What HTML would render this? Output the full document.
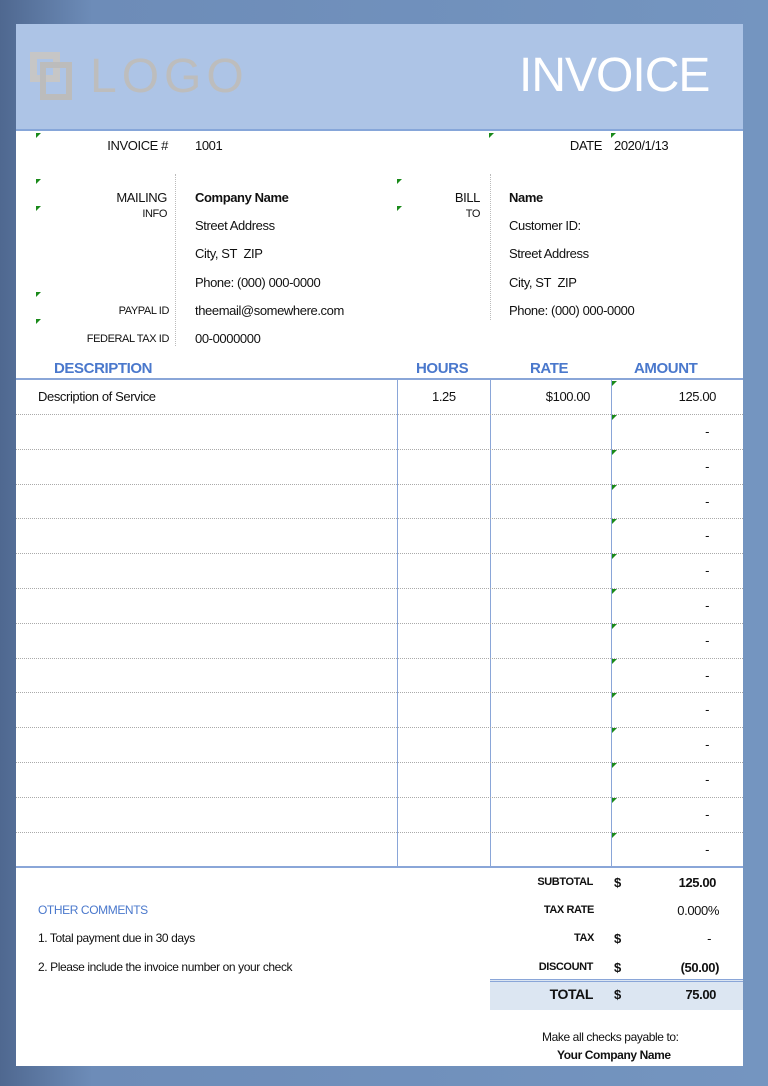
<!DOCTYPE html>
<html><head><meta charset="utf-8"><style>
*{margin:0;padding:0;box-sizing:border-box}
body{width:768px;height:1086px;background:linear-gradient(90deg,#4f6890 0,#6d8cb8 12%,#7495c0 100%);position:relative;overflow:hidden;font-family:"Liberation Sans",sans-serif;color:#111;font-size:13px;letter-spacing:-0.4px}
.pg{position:absolute;left:16px;top:24px;width:727px;height:1042px;background:#fff}
.hd{position:absolute;left:0;top:0;width:727px;height:107px;background:#adc4e6;border-bottom:2px solid #86a6d9}
.a{position:absolute;white-space:nowrap}
.r{text-align:right}
.b{font-weight:bold}
.bl{color:#4a78cc;font-weight:bold;font-size:15px}
.tri{position:absolute;width:0;height:0;border-top:5px solid #1a8a1a;border-right:5px solid transparent}
.vl{position:absolute;width:1px;background:#8aa6d8}
.rl{position:absolute;left:0;width:727px;border-top:1px dotted #aaa}
.sm{font-size:11px}
</style></head><body>
<div class="pg">
<div class="hd">
 <div class="a" style="left:14px;top:28px;width:30px;height:30px;border:7px solid #c6c6c6"></div>
 <div class="a" style="left:24px;top:38px;width:32px;height:38px;border:6px solid #bcbcbc"></div>
 <div class="a" style="left:74px;top:25px;font-size:48px;color:#bdbdbd;letter-spacing:5px">LOGO</div>
 <div class="a" style="left:503px;top:24px;font-size:48px;color:#fff;letter-spacing:-1px">INVOICE</div>
</div>
<div class="tri" style="left:20px;top:109px"></div><div class="tri" style="left:473px;top:109px"></div><div class="tri" style="left:595px;top:109px"></div>
<div class="a r" style="left:40px;width:112px;top:114px">INVOICE #</div>
<div class="a" style="left:179px;top:114px">1001</div>
<div class="a r" style="left:480px;width:106px;top:114px">DATE</div>
<div class="a" style="left:598px;top:114px">2020/1/13</div>

<div class="tri" style="left:20px;top:155px"></div><div class="tri" style="left:20px;top:182px"></div><div class="tri" style="left:20px;top:268px"></div><div class="tri" style="left:20px;top:295px"></div>
<div class="tri" style="left:381px;top:155px"></div><div class="tri" style="left:381px;top:182px"></div>
<div class="a" style="left:159px;top:150px;height:172px;border-left:1px dotted #bbb"></div>
<div class="a" style="left:474px;top:150px;height:146px;border-left:1px dotted #bbb"></div>
<div class="a r" style="left:40px;width:111px;top:166px">MAILING</div>
<div class="a r sm" style="left:40px;width:111px;top:184px">INFO</div>
<div class="a r sm" style="left:40px;width:113px;top:281px">PAYPAL ID</div>
<div class="a r sm" style="left:40px;width:113px;top:309px">FEDERAL TAX ID</div>
<div class="a b" style="left:179px;top:166px">Company Name</div>
<div class="a" style="left:179px;top:194px">Street Address</div>
<div class="a" style="left:179px;top:222px">City, ST&nbsp; ZIP</div>
<div class="a" style="left:179px;top:251px">Phone: (000) 000-0000</div>
<div class="a" style="left:179px;top:279px">theemail@somewhere.com</div>
<div class="a" style="left:179px;top:307px">00-0000000</div>
<div class="a r" style="left:400px;width:64px;top:166px">BILL</div>
<div class="a r sm" style="left:400px;width:64px;top:184px">TO</div>
<div class="a b" style="left:493px;top:166px">Name</div>
<div class="a" style="left:493px;top:194px">Customer ID:</div>
<div class="a" style="left:493px;top:222px">Street Address</div>
<div class="a" style="left:493px;top:251px">City, ST&nbsp; ZIP</div>
<div class="a" style="left:493px;top:279px">Phone: (000) 000-0000</div>

<div class="a bl" style="left:38px;top:336px">DESCRIPTION</div>
<div class="a bl" style="left:400px;top:336px">HOURS</div>
<div class="a bl" style="left:514px;top:336px">RATE</div>
<div class="a bl" style="left:618px;top:336px">AMOUNT</div>
<div class="a" style="left:0;top:354px;width:727px;border-top:2px solid #8aa6d8"></div>
<div class="vl" style="left:381px;top:356px;height:487px"></div>
<div class="vl" style="left:474px;top:356px;height:487px"></div>
<div class="vl" style="left:595px;top:356px;height:487px"></div>
<div class="a" style="left:0;top:842px;width:727px;border-top:2px solid #8aa6d8"></div>
<div class="a" style="left:22px;top:365px">Description of Service</div>
<div class="a" style="left:416px;top:365px">1.25</div>
<div class="a r" style="left:480px;width:94px;top:365px">$100.00</div>
<div class="a r" style="left:600px;width:100px;top:365px">125.00</div>
<div class="tri" style="left:596px;top:357px"></div>
<div id="rows"></div>
<script>
var h='';for(var i=0;i<13;i++){var t=390+i*34.8;h+='<div class="rl" style="top:'+t+'px"></div>';h+='<div class="tri" style="left:596px;top:'+(t+1)+'px"></div>';h+='<div class="a r" style="left:600px;width:93px;top:'+(t+10)+'px">-</div>';}
document.getElementById('rows').innerHTML=h;
</script>

<div class="a r b sm" style="left:470px;width:107px;top:852px">SUBTOTAL</div>
<div class="a b" style="left:598px;top:851px">$</div>
<div class="a r b" style="left:600px;width:100px;top:851px">125.00</div>
<div class="a r b sm" style="left:470px;width:108px;top:880px">TAX RATE</div>
<div class="a r" style="left:600px;width:103px;top:879px">0.000%</div>
<div class="a r b sm" style="left:470px;width:108px;top:908px">TAX</div>
<div class="a b" style="left:598px;top:907px">$</div>
<div class="a r" style="left:600px;width:95px;top:907px">-</div>
<div class="a r b sm" style="left:470px;width:107px;top:937px">DISCOUNT</div>
<div class="a b" style="left:598px;top:936px">$</div>
<div class="a r b" style="left:600px;width:103px;top:936px">(50.00)</div>
<div class="a" style="left:474px;top:955px;width:253px;height:31px;background:#dce6f2;border-top:3px double #8aa6d8"></div>
<div class="a r b" style="left:470px;width:107px;top:962px;font-size:14px">TOTAL</div>
<div class="a b" style="left:598px;top:963px">$</div>
<div class="a r b" style="left:600px;width:100px;top:963px">75.00</div>

<div class="a" style="left:22px;top:879px;color:#4a78cc;font-size:12px">OTHER COMMENTS</div>
<div class="a" style="left:22px;top:907px;font-size:12px">1. Total payment due in 30 days</div>
<div class="a" style="left:22px;top:936px;font-size:12px">2. Please include the invoice number on your check</div>
<div class="a" style="left:526px;top:1006px;font-size:12px">Make all checks payable to:</div>
<div class="a b" style="left:541px;top:1024px;font-size:12px">Your Company Name</div>
</div>
</body></html>
